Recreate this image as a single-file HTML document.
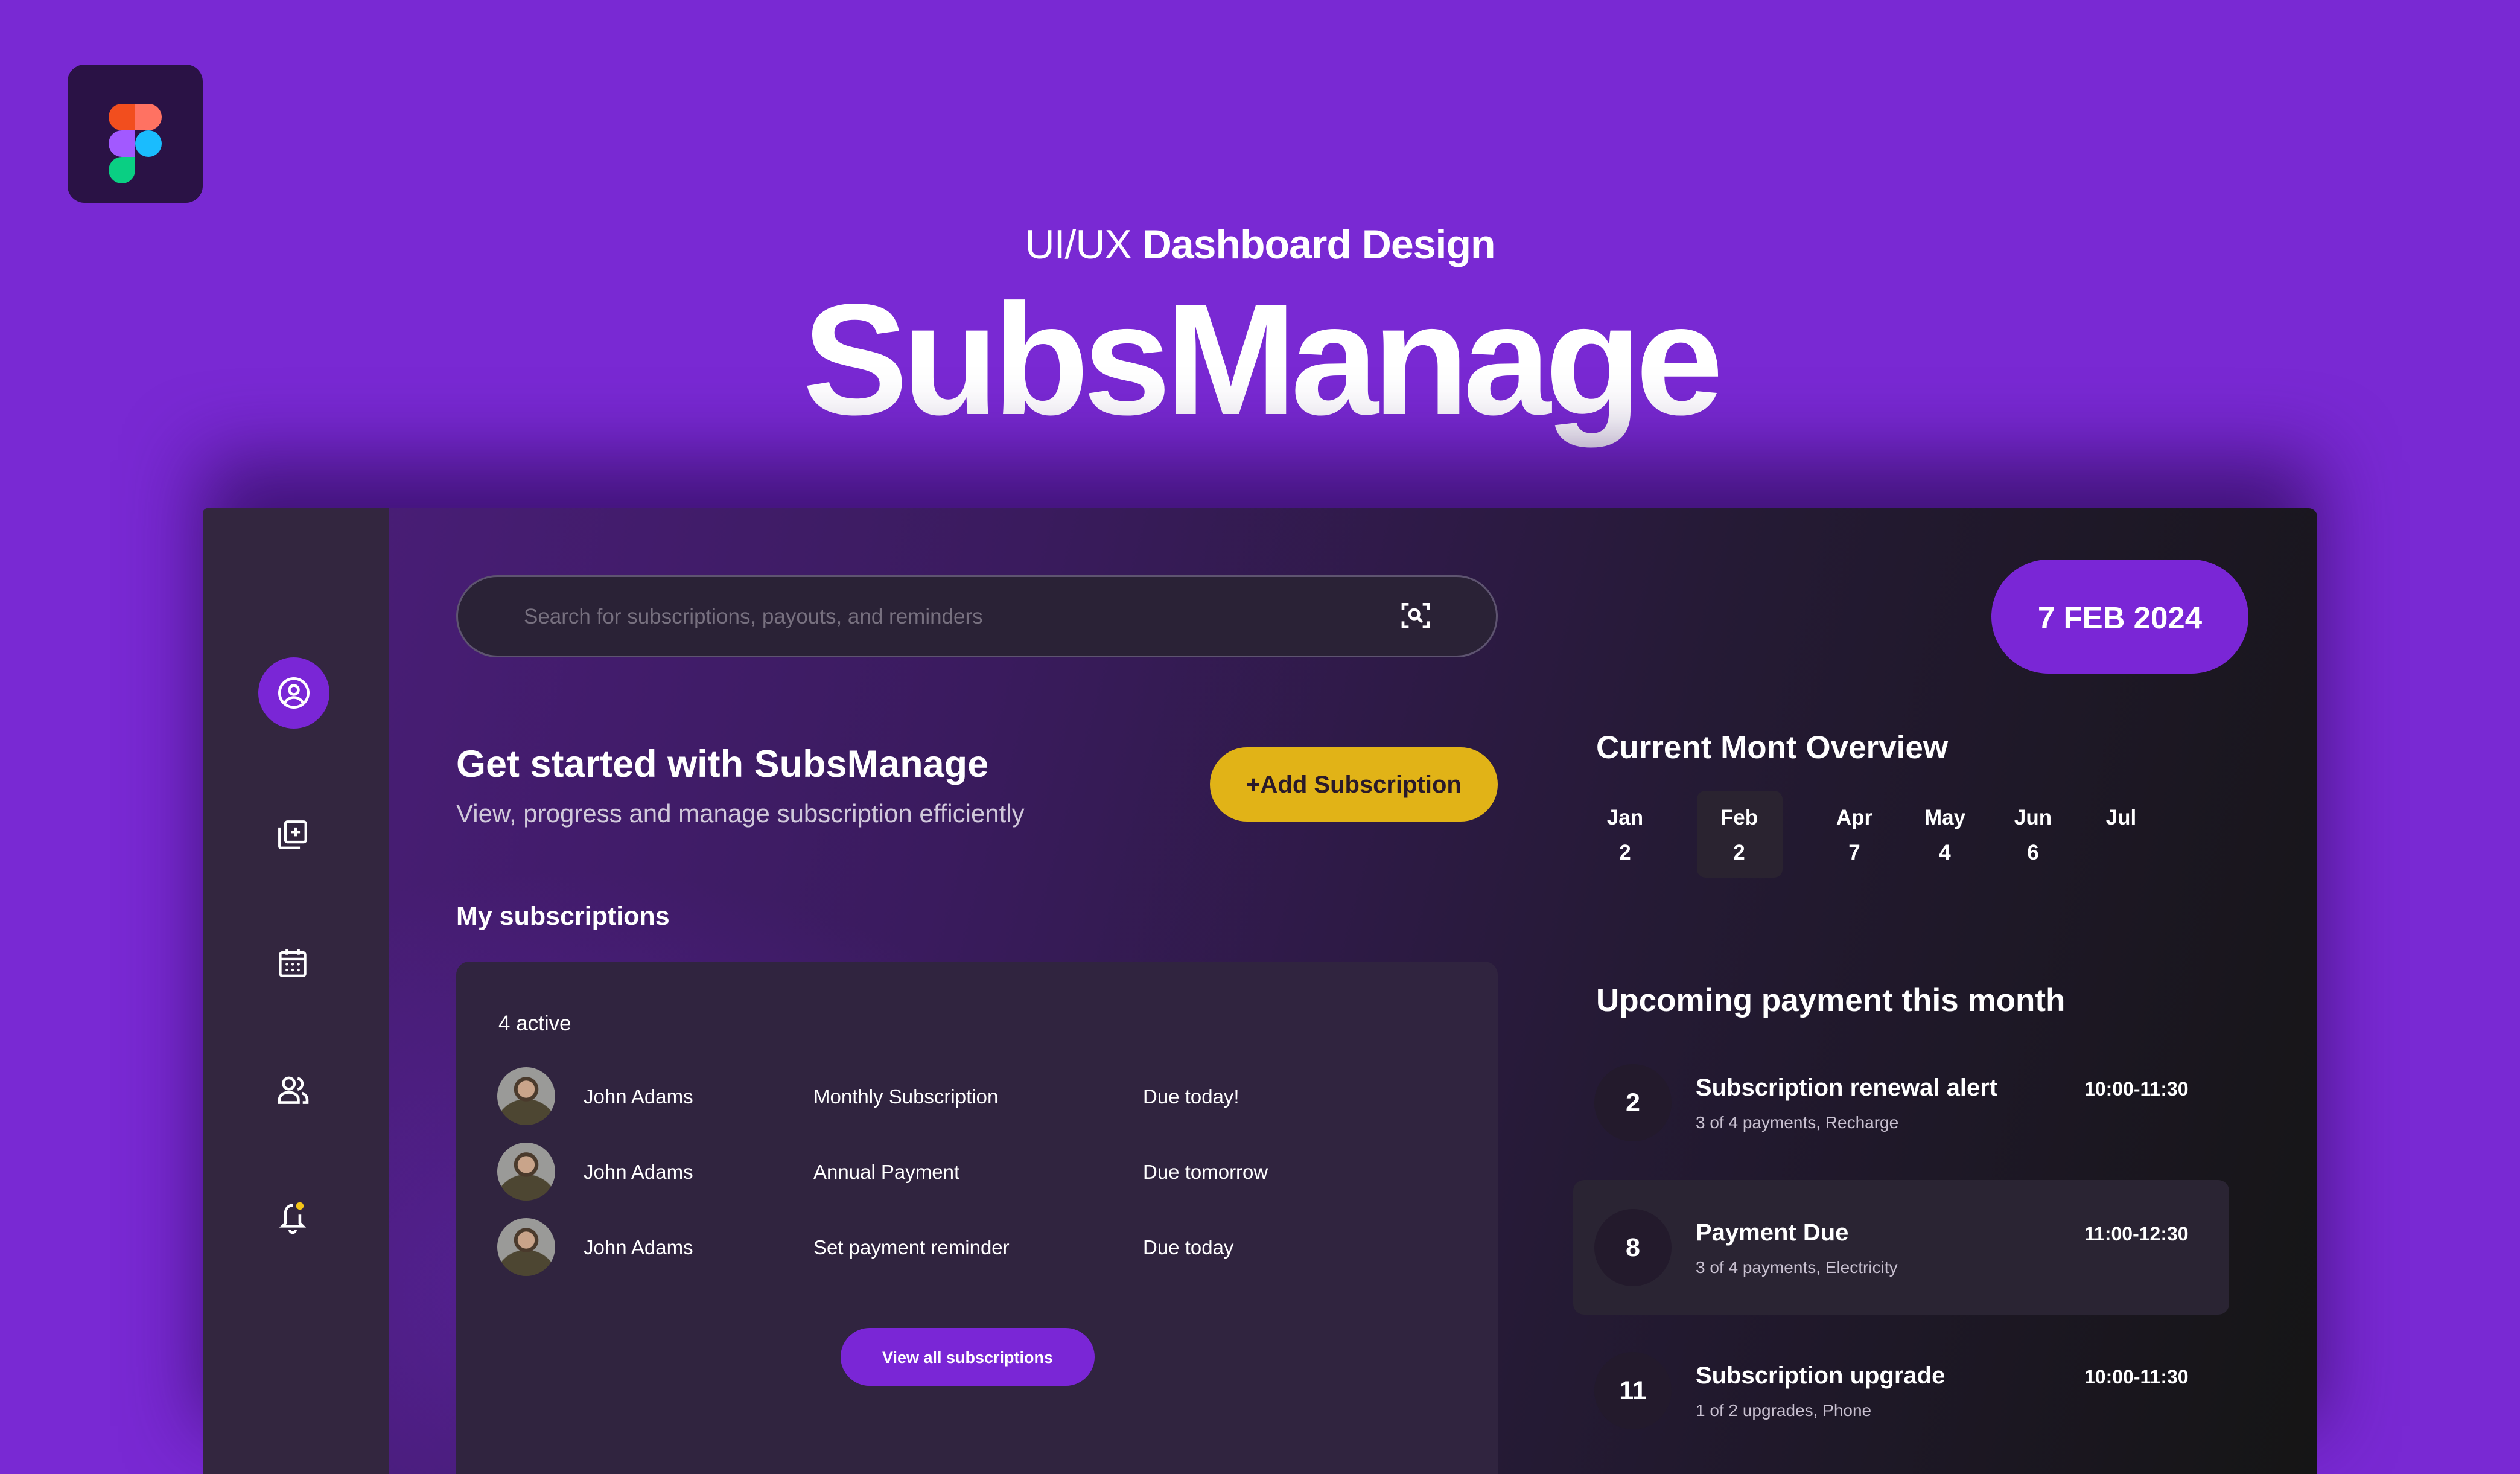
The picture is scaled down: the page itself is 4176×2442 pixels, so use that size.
<!DOCTYPE html>
<html><head><meta charset="utf-8"><style>
*{margin:0;padding:0;box-sizing:border-box}
body{width:4176px;height:2349px;overflow:hidden;background:#7929d3;font-family:"Liberation Sans",sans-serif;color:#fff;position:relative}
.a{position:absolute}
.fig{left:112px;top:107px;width:224px;height:229px;background:#2a1245;border-radius:28px}
.panel{left:336px;top:842px;width:3504px;height:1600px;border-radius:8px 14px 0 0;overflow:hidden;
background:radial-gradient(ellipse 1400px 1000px at 600px 1300px,rgba(100,35,180,.55),transparent 70%),linear-gradient(105deg,#4c1e7c 0%,#3a1b5e 35%,#251a35 65%,#151515 100%);
box-shadow:0 -80px 260px rgba(45,12,90,.75)}
.side{left:0;top:0;width:309px;height:1600px;background:#33263f}
.t{white-space:nowrap}
.mon{font-size:35px;font-weight:bold;text-align:center;width:120px;line-height:58px}
.circ{width:128px;height:128px;border-radius:50%;background:#231a2c;font-size:43px;font-weight:bold;display:flex;align-items:center;justify-content:center}
.it{font-size:40px;font-weight:bold}
.sub{font-size:28px;color:#c8c0d0}
.tm{font-size:32px;font-weight:bold}
.row{font-size:33px}
.av{width:96px;height:96px;border-radius:50%;background:radial-gradient(circle at 50% 38%,#c9a48a 0 18%,#4a3a2c 19% 26%,transparent 27%),radial-gradient(circle at 50% 110%,#4d4632 0 45%,#9a9a98 46%)}
</style></head><body>
<div class="a fig">
<svg width="224" height="229" viewBox="0 0 224 229"><g>
<path d="M68 175a22 22 0 0 0 22 22a22 22 0 0 0 22-22v-22H90a22 22 0 0 0-22 22z" fill="#0acf83"/>
<path d="M68 131a22 22 0 0 1 22-22h22v44H90a22 22 0 0 1-22-22z" fill="#a259ff"/>
<path d="M68 87a22 22 0 0 1 22-22h22v44H90a22 22 0 0 1-22-22z" fill="#f24e1e"/>
<path d="M112 65h22a22 22 0 0 1 0 44h-22z" fill="#ff7262"/>
<circle cx="134" cy="131" r="22" fill="#1abcfe"/></g></svg></div>
<div class="a t" style="left:0;width:4176px;text-align:center;top:366px;font-size:68px;letter-spacing:-1px"><span style="font-weight:300">UI/UX </span><b>Dashboard Design</b></div>
<div class="a t" style="left:0;width:4176px;text-align:center;top:436px;font-size:262px;font-weight:bold;letter-spacing:-10px;line-height:320px">SubsManage</div>

<div class="a panel">
<div class="a side"></div>
<div class="a" style="left:92px;top:247px;width:118px;height:118px;border-radius:50%;background:#7a26d6"></div>
<svg class="a" style="left:121px;top:276px" width="60" height="60" viewBox="0 0 24 24" fill="none" stroke="#fff" stroke-width="1.8"><circle cx="12" cy="12" r="9.5"/><circle cx="12" cy="10" r="3"/><path d="M6 18.5c1.5-2.5 3.5-3.5 6-3.5s4.5 1 6 3.5"/></svg>
<svg class="a" style="left:120px;top:512px" width="58" height="58" viewBox="0 0 24 24" fill="none" stroke="#fff" stroke-width="1.8"><rect x="7" y="3" width="14" height="14" rx="1.5"/><path d="M3 7v13a1 1 0 0 0 1 1h13M14 7v6M11 10h6"/></svg>
<svg class="a" style="left:120px;top:724px" width="58" height="58" viewBox="0 0 24 24" fill="none" stroke="#fff" stroke-width="1.8"><rect x="3.5" y="5" width="17" height="16" rx="1.5"/><path d="M3.5 9.5h17M8 2.5v4M16 2.5v4"/><g fill="#fff" stroke="none"><circle cx="8" cy="13" r=".9"/><circle cx="12" cy="13" r=".9"/><circle cx="16" cy="13" r=".9"/><circle cx="8" cy="17" r=".9"/><circle cx="12" cy="17" r=".9"/><circle cx="16" cy="17" r=".9"/></g></svg>
<svg class="a" style="left:120px;top:935px" width="60" height="58" viewBox="0 0 24 24" fill="none" stroke="#fff" stroke-width="1.9"><circle cx="9" cy="7.5" r="3.8"/><path d="M2.5 20.5v-2c0-3 3-5 6.5-5s6.5 2 6.5 5v2z"/><path d="M15 4a3.8 3.8 0 0 1 0 7.5M18 14c2 .8 3.5 2.4 3.5 4.5v2h-3"/></svg>
<svg class="a" style="left:120px;top:1144px" width="58" height="62" viewBox="0 0 24 26" fill="none" stroke="#fff" stroke-width="1.9"><path d="M12 4.5c-3 0-5 2.4-5 5.5v7l-2 2h14l-2-2v-6"/><path d="M10 21.5a2 2 0 0 0 4 0"/><circle cx="17" cy="5" r="2.6" fill="#f5c518" stroke="none"/></svg>

<div class="a" style="left:420px;top:111px;width:1726px;height:136px;border-radius:68px;background:#2a2236;border:3px solid #5e5470"></div>
<div class="a t" style="left:532px;top:160px;font-size:35px;color:#77707f">Search for subscriptions, payouts, and reminders</div>
<svg class="a" style="left:1982px;top:150px" width="56" height="56" viewBox="0 0 24 24" fill="none" stroke="#fff" stroke-width="2"><path d="M3 8V4h4M17 4h4v4M21 16v4h-4M7 20H3v-4"/><circle cx="11" cy="11" r="3.3"/><path d="M13.5 13.5l3 3"/></svg>

<div class="a" style="left:2964px;top:85px;width:426px;height:189px;border-radius:95px;background:#7a26d6"></div>
<div class="a t" style="left:2964px;width:426px;text-align:center;top:152px;font-size:51px;font-weight:bold">7 FEB 2024</div>

<div class="a t" style="left:420px;top:388px;font-size:63px;font-weight:bold">Get started with SubsManage</div>
<div class="a t" style="left:420px;top:482px;font-size:42px;color:#d0c8da">View, progress and manage subscription efficiently</div>
<div class="a" style="left:1669px;top:396px;width:477px;height:123px;border-radius:62px;background:#e1b317"></div>
<div class="a t" style="left:1669px;width:477px;text-align:center;top:436px;font-size:40px;font-weight:bold;color:#2a1a2a">+Add Subscription</div>
<div class="a t" style="left:420px;top:652px;font-size:43px;font-weight:bold">My subscriptions</div>

<div class="a" style="left:420px;top:751px;width:1726px;height:900px;border-radius:22px;background:#30243f"></div>
<div class="a t" style="left:490px;top:834px;font-size:35px">4 active</div>
<div class="a av" style="left:488px;top:926px"></div>
<div class="a av" style="left:488px;top:1051px"></div>
<div class="a av" style="left:488px;top:1176px"></div>
<div class="a t row" style="left:631px;top:956px">John Adams</div>
<div class="a t row" style="left:1012px;top:956px">Monthly Subscription</div>
<div class="a t row" style="left:1558px;top:956px">Due today!</div>
<div class="a t row" style="left:631px;top:1081px">John Adams</div>
<div class="a t row" style="left:1012px;top:1081px">Annual Payment</div>
<div class="a t row" style="left:1558px;top:1081px">Due tomorrow</div>
<div class="a t row" style="left:631px;top:1206px">John Adams</div>
<div class="a t row" style="left:1012px;top:1206px">Set payment reminder</div>
<div class="a t row" style="left:1558px;top:1206px">Due today</div>
<div class="a" style="left:1057px;top:1358px;width:421px;height:96px;border-radius:48px;background:#7a26d6"></div>
<div class="a t" style="left:1057px;width:421px;text-align:center;top:1392px;font-size:27px;font-weight:bold">View all subscriptions</div>

<div class="a t" style="left:2309px;top:366px;font-size:53px;font-weight:bold">Current Mont Overview</div>
<div class="a" style="left:2476px;top:468px;width:142px;height:144px;border-radius:14px;background:#2a2330"></div>
<div class="a mon" style="left:2297px;top:484px">Jan<br>2</div>
<div class="a mon" style="left:2486px;top:484px">Feb<br>2</div>
<div class="a mon" style="left:2677px;top:484px">Apr<br>7</div>
<div class="a mon" style="left:2827px;top:484px">May<br>4</div>
<div class="a mon" style="left:2973px;top:484px">Jun<br>6</div>
<div class="a mon" style="left:3119px;top:484px">Jul</div>

<div class="a t" style="left:2309px;top:785px;font-size:53px;font-weight:bold">Upcoming payment this month</div>

<div class="a" style="left:2271px;top:1113px;width:1087px;height:223px;border-radius:18px;background:#2a2433"></div>
<div class="a circ" style="left:2306px;top:921px">2</div>
<div class="a t it" style="left:2474px;top:938px">Subscription renewal alert</div>
<div class="a t sub" style="left:2474px;top:1002px">3 of 4 payments, Recharge</div>
<div class="a t tm" style="left:3118px;top:944px">10:00-11:30</div>
<div class="a circ" style="left:2306px;top:1161px">8</div>
<div class="a t it" style="left:2474px;top:1178px">Payment Due</div>
<div class="a t sub" style="left:2474px;top:1242px">3 of 4 payments, Electricity</div>
<div class="a t tm" style="left:3118px;top:1184px">11:00-12:30</div>
<div class="a circ" style="left:2306px;top:1398px">11</div>
<div class="a t it" style="left:2474px;top:1415px">Subscription upgrade</div>
<div class="a t sub" style="left:2474px;top:1479px">1 of 2 upgrades, Phone</div>
<div class="a t tm" style="left:3118px;top:1421px">10:00-11:30</div>
</div>
</body></html>
